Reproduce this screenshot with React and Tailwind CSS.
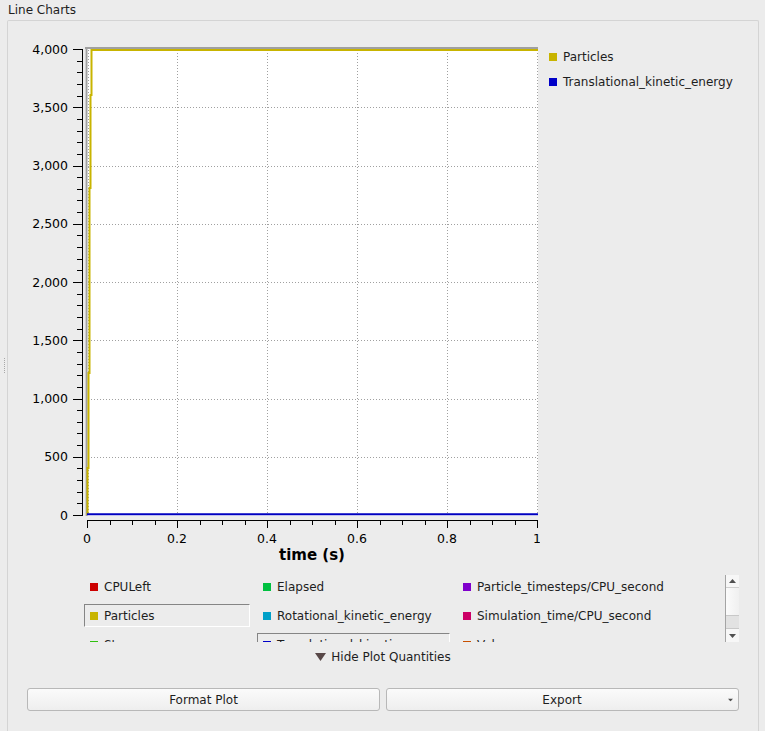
import React from "react";

const yPos = (v) => 515 - v * 0.1165;
const xPos = (t) => 87 + t * 450;

const quantities = [
  { name: "CPULeft", color: "bg-[#cc0000]" },
  { name: "Elapsed", color: "bg-[#00c040]" },
  { name: "Particle_timesteps/CPU_second", color: "bg-[#7f00cc]" },
  { name: "Particles", color: "bg-[#c8b400]", boxed: true },
  { name: "Rotational_kinetic_energy", color: "bg-[#00a0c8]" },
  { name: "Simulation_time/CPU_second", color: "bg-[#cc0066]" },
  { name: "Step", color: "bg-[#30c010]" },
  { name: "Translational_kinetic_energy", color: "bg-[#0000c8]", boxed: true },
  { name: "Volume", color: "bg-[#c85000]" },
];

const Chart = () => {
  const yMinor = Array.from({ length: 41 }, (_, i) => i * 100);
  const yMajor = Array.from({ length: 9 }, (_, i) => i * 500);
  const xMinor = Array.from({ length: 21 }, (_, i) => i * 0.05);
  const xMajor = [0, 0.2, 0.4, 0.6, 0.8, 1];
  const xLabels = ["0", "0.2", "0.4", "0.6", "0.8", "1"];

  return (
    <svg width="532" height="545" viewBox="8 21 532 545" className="block shrink-0">
      <rect x="85" y="47" width="453" height="469" fill="#ffffff" />

      {/* grid */}
      {[1, 2, 3, 4, 5, 6, 7].map((k) => (
        <line key={"h" + k} x1="88" x2="538" y1={Math.round(yPos(k * 500)) + 0.5} y2={Math.round(yPos(k * 500)) + 0.5} stroke="#a0a0a0" strokeDasharray="1 2" />
      ))}
      {[0, 1, 2, 3, 4, 5].map((k) => (
        <line key={"v" + k} x1={k === 0 ? 88.5 : Math.round(xPos(k * 0.2)) + 0.5} x2={k === 0 ? 88.5 : Math.round(xPos(k * 0.2)) + 0.5} y1="50" y2="515" stroke="#a0a0a0" strokeDasharray="1 2" />
      ))}

      {/* frame series */}
      <line x1="85" x2="538" y1="48" y2="48" stroke="#a0a0a0" strokeWidth="2" />
      <line x1="86.5" x2="86.5" y1="47" y2="516" stroke="#a0a0a0" strokeWidth="2" />

      {/* particles */}
      <polyline
        points="87.5,515 87.5,468 88.5,468 88.5,373 89.5,373 89.5,188 90.5,188 90.5,95 91.5,95 91.5,50 538,50"
        fill="none"
        stroke="#c8b400"
        strokeWidth="2"
      />
      {/* translational kinetic energy */}
      <line x1="87" x2="538" y1="514.3" y2="514.3" stroke="#0000c0" strokeWidth="2" />

      {/* y axis */}
      <line x1="82.5" x2="82.5" y1="49" y2="516" stroke="#000" />
      {yMinor.map((v) => (
        <line key={"ym" + v} x1={v % 500 === 0 ? 73 : 77} x2="82.5" y1={Math.round(yPos(v)) + 0.5} y2={Math.round(yPos(v)) + 0.5} stroke="#000" />
      ))}
      {yMajor.map((v) => (
        <text key={"yl" + v} x="68" y={yPos(v) + 4.5} textAnchor="end" fontSize="12.5" fontFamily="'DejaVu Sans', sans-serif" fill="#000">
          {v.toLocaleString("en-US")}
        </text>
      ))}

      {/* x axis */}
      <line x1="87" x2="538" y1="520.5" y2="520.5" stroke="#000" />
      {xMinor.map((t, i) => (
        <line key={"xm" + i} x1={Math.round(xPos(t)) + 0.5} x2={Math.round(xPos(t)) + 0.5} y1="520.5" y2={i % 4 === 0 ? 528 : 525} stroke="#000" />
      ))}
      {xMajor.map((t, i) => (
        <text key={"xl" + i} x={xPos(t)} y="542.5" textAnchor="middle" fontSize="12.5" fontFamily="'DejaVu Sans', sans-serif" fill="#000">
          {xLabels[i]}
        </text>
      ))}
      <text x="312" y="560" textAnchor="middle" fontSize="15" fontWeight="bold" fontFamily="'DejaVu Sans', sans-serif" fill="#000">
        time (s)
      </text>
    </svg>
  );
};

const Tri = ({ down, className }) => (
  <svg width="7" height="4" viewBox="0 0 7 4" className={className}>
    <polygon points={down ? "0,0 7,0 3.5,4" : "0,4 7,4 3.5,0"} fill="#505050" />
  </svg>
);

const App = () => {
  return (
    <div className="w-[765px] h-[731px] overflow-hidden bg-[#ececec] flex font-['DejaVu_Sans',sans-serif] text-[12px] text-[#1e1e1e]">
      {/* splitter handle */}
      <div className="w-[7px] shrink-0 flex items-center">
        <div className="ml-[4px] w-px h-[15px] border-l border-dotted border-[#a8a8a8]" />
      </div>

      <div className="flex-1 flex flex-col pr-[6px]">
        <div className="h-[20px] leading-[20px] pl-px">Line Charts</div>

        <div className="flex-1 border border-b-0 border-[#d4d4d4] rounded-t-[2px] flex flex-col">
          {/* chart row */}
          <div className="flex">
            <Chart />
            <div className="flex-1 pl-[9px] pt-[23px] flex flex-col">
              <div className="h-[25px] flex items-center gap-[6px]">
                <span className="w-[8px] h-[8px] bg-[#c8b400]" />
                <span>Particles</span>
              </div>
              <div className="h-[25px] flex items-center gap-[6px]">
                <span className="w-[8px] h-[8px] bg-[#0000c8]" />
                <span>Translational_kinetic_energy</span>
              </div>
            </div>
          </div>

          {/* plot quantities */}
          <div className="mt-[9px] h-[67px] flex pl-[76px]">
            <div className="w-[634px] h-full overflow-hidden">
              <div className="grid grid-cols-[166px_193px_1fr] gap-x-[7px] gap-y-[6px]">
                {quantities.map((q) => (
                  <div
                    key={q.name}
                    className={`h-[23px] flex items-center gap-[6px] pl-[5px] border whitespace-nowrap overflow-hidden ${
                      q.boxed
                        ? "border-t-[#858585] border-l-[#858585] border-b-white border-r-white"
                        : "border-transparent"
                    }`}
                  >
                    <span className={`w-[8px] h-[8px] shrink-0 ${q.color}`} />
                    <span>{q.name}</span>
                  </div>
                ))}
              </div>
            </div>
            <div className="ml-[7px] w-[14px] h-full flex flex-col border-l border-[#a4a4a4] bg-[#f7f7f7]">
              <div className="h-[13px] flex items-center justify-center border-b border-[#d0d0d0]">
                <Tri />
              </div>
              <div className="h-[27px] bg-gradient-to-r from-[#fbfbfb] to-[#f0f0f0]" />
              <div className="h-[14px] bg-[#e2e2e2] border-y border-[#c8c8c8]" />
              <div className="flex-1 flex items-center justify-center">
                <Tri down />
              </div>
            </div>
          </div>

          {/* hide toggle */}
          <div className="mt-[6px] h-[17px] flex items-center justify-center gap-[5px]">
            <svg width="11" height="8" viewBox="0 0 11 8">
              <polygon points="0,0 11,0 5.5,8" fill="#584848" />
            </svg>
            <span>Hide Plot Quantities</span>
          </div>

          {/* buttons */}
          <div className="mt-[23px] px-[19px] flex gap-[6px]">
            <button className="flex-1 h-[23px] rounded-[3px] border border-[#b8b8b8] bg-gradient-to-b from-[#fbfbfb] to-[#eeeeee] text-[12px] text-[#1e1e1e]">
              Format Plot
            </button>
            <button className="flex-1 h-[23px] rounded-[3px] border border-[#b8b8b8] bg-gradient-to-b from-[#fbfbfb] to-[#eeeeee] text-[12px] text-[#1e1e1e] flex items-center">
              <span className="flex-1 text-center pl-[10px]">Export</span>
              <Tri down className="mr-[4px] scale-75" />
            </button>
          </div>
        </div>
      </div>
    </div>
  );
};

export default App;
